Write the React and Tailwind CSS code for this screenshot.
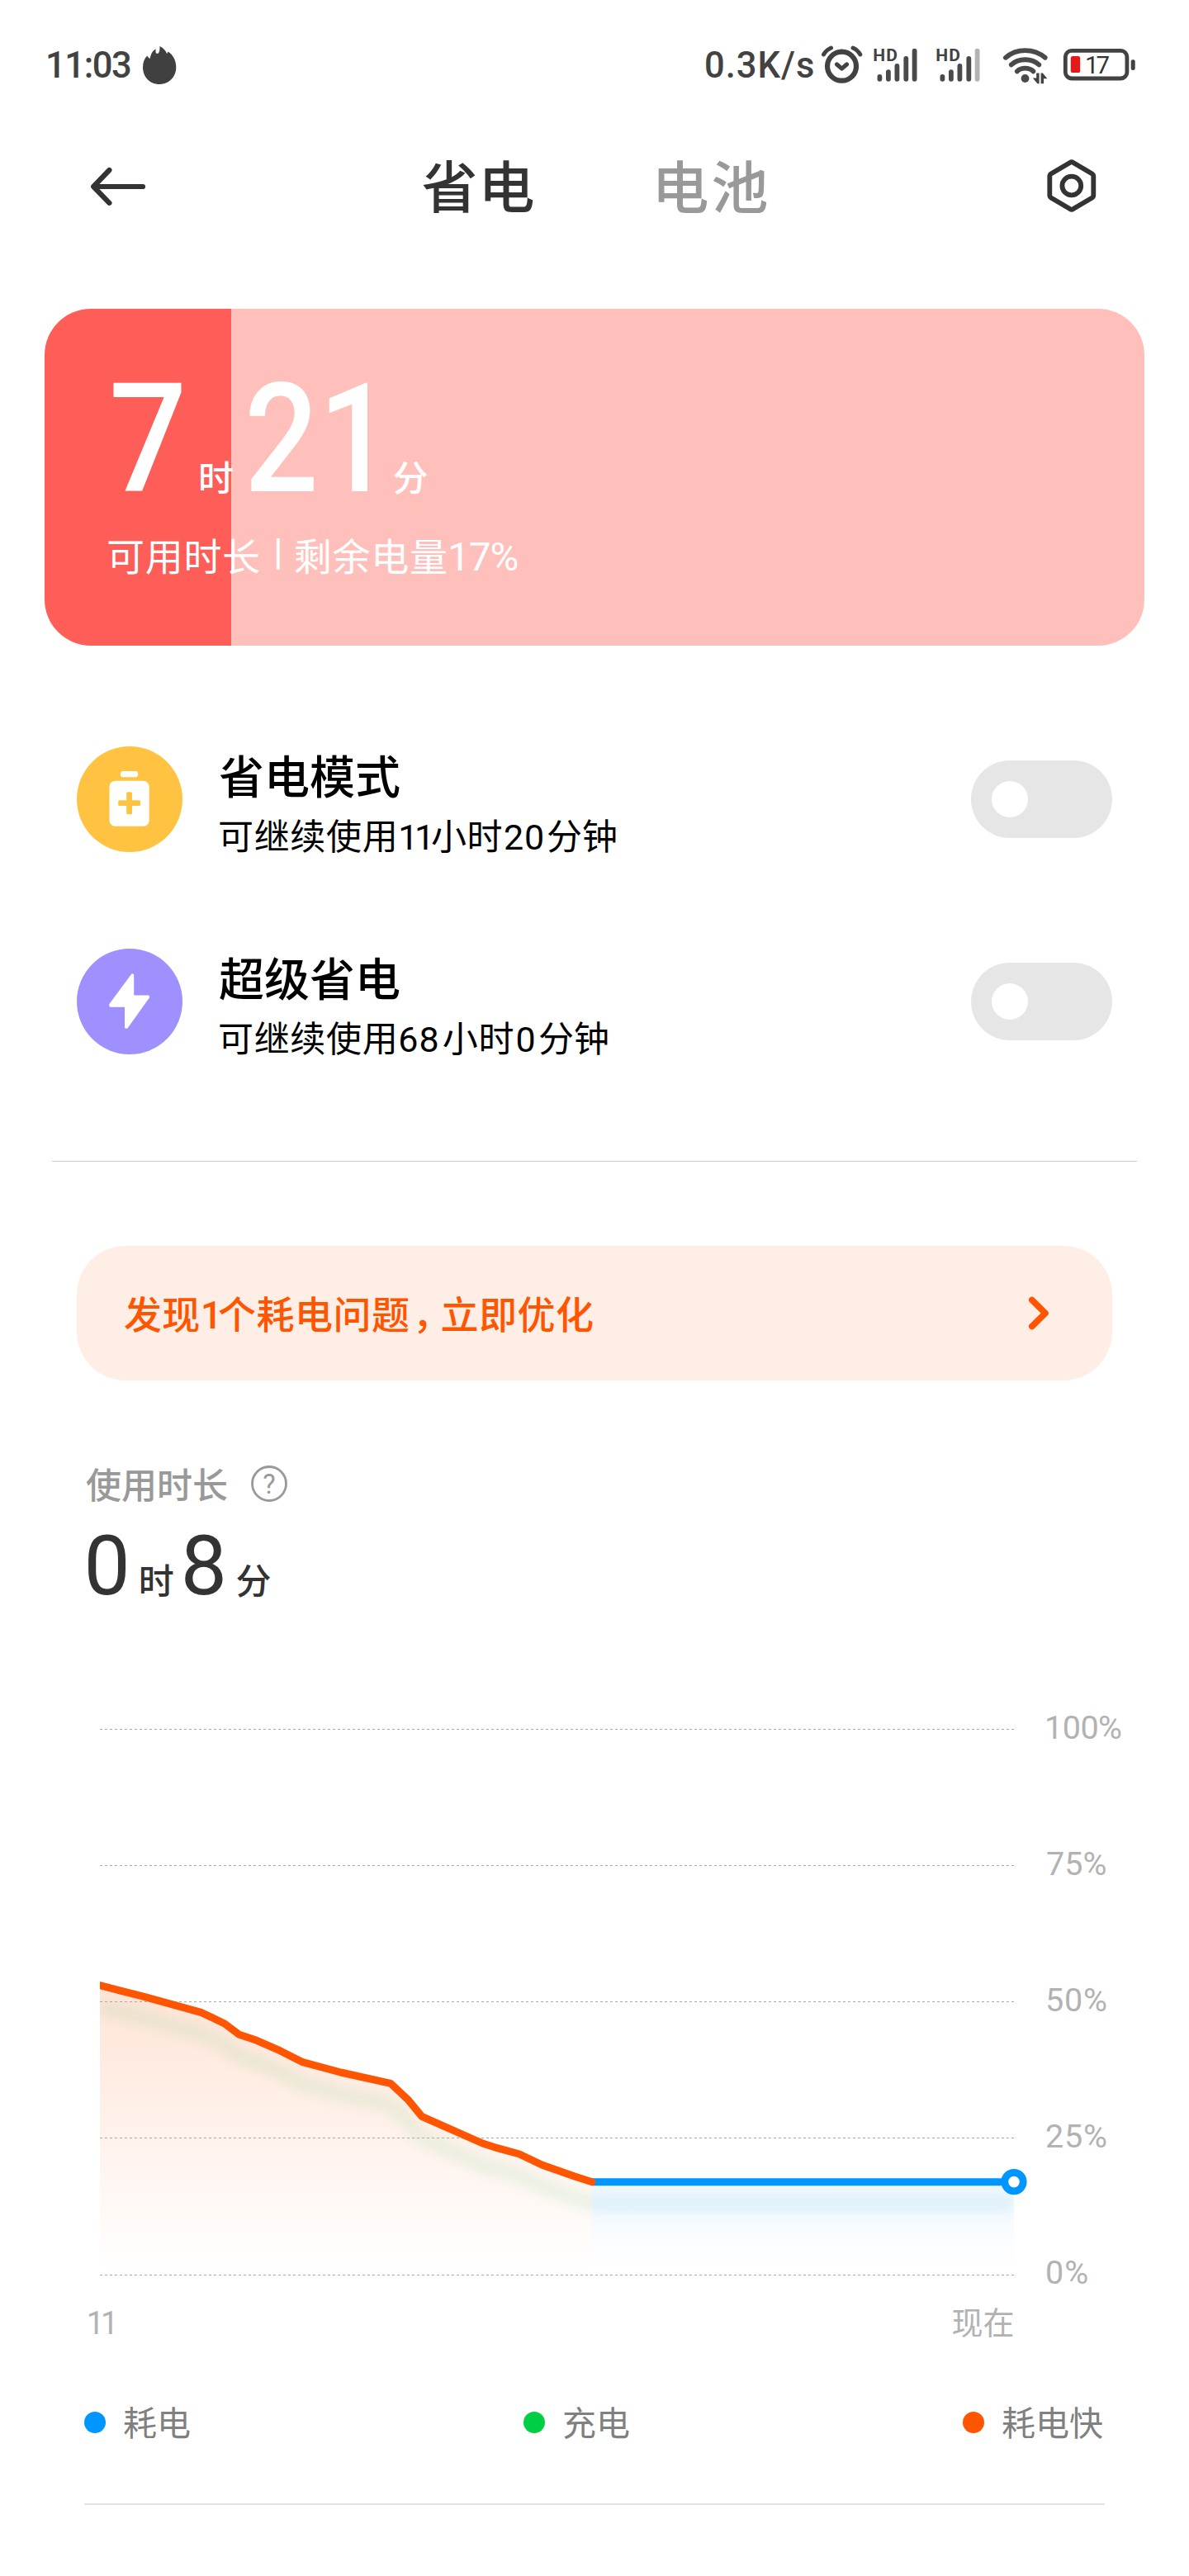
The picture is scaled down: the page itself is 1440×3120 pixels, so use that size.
import React from "react";

const FONT = 'Roboto, "Noto Sans CJK SC", sans-serif';

const SERIES = [
  [121, 2404.7], [147.9, 2411.7], [174.6, 2418.3], [244.3, 2437.7], [272, 2451],
  [289.8, 2464.3], [310.8, 2471.3], [339, 2483.7], [365.7, 2497.3], [412.6, 2510],
  [472.9, 2523.3], [493.8, 2542.7], [510.8, 2563.3], [584.5, 2596], [602.3, 2601.7],
  [629, 2609], [656.8, 2622.3], [696, 2636], [717, 2642.7],
];
const LINE = "M" + SERIES.map((p) => p.join(" ")).join("L");

function Alarm() {
  return (
    <svg className="h-[60px] w-[60px] shrink-0" viewBox="990 50 60 60" fill="none" stroke="#424242" strokeLinecap="round" strokeLinejoin="round">
      <circle cx="1019.5" cy="80.2" r="17.5" strokeWidth="6.2" />
      <path d="M997.5 66C999.5 62.5 1003 59.5 1006.5 58M1033 58C1036.5 59.5 1039.8 62.5 1041.8 66" strokeWidth="5" />
      <path d="M1013.5 78L1019.5 83.2L1025.5 78" strokeWidth="5" />
    </svg>
  );
}

function Signal({ weak }) {
  return (
    <svg className="h-[60px] w-[60px] shrink-0" viewBox="1055 50 60 60" fill="none" stroke="#4a4a4a" strokeLinecap="round" strokeWidth="5.8">
      <text x="1057.2" y="73.5" fontSize="21" fontWeight="700" letterSpacing="1.2" fill="#424242" stroke="none" fontFamily={FONT}>HD</text>
      <path d="M1065.4 93V95.8M1075.9 87.2V95.8M1086.4 80V95.8M1097.3 71V95.8" />
      <path d="M1107.6 61.6V95.8" stroke={weak ? "#b3b3b3" : "#4a4a4a"} />
    </svg>
  );
}

function Wifi() {
  return (
    <svg className="h-[60px] w-[65px] shrink-0" viewBox="1210 50 65 60" fill="none" stroke="#4a4a4a" strokeLinecap="round" strokeWidth="5.8">
      <path d="M1217.9 69.8C1231 58.2 1252 58.2 1265.7 69.8" />
      <path d="M1224.8 78.4C1233.5 70.2 1249.5 70.2 1258.3 78.4" />
      <path d="M1231.8 86.4C1236.5 81.4 1246.5 81.4 1251.4 86.4" />
      <circle cx="1241.5" cy="95" r="4.9" fill="#4a4a4a" stroke="none" />
      <path d="M1258.6 88.6V101.2H1256.4L1250.8 94.6H1255.2V88.6ZM1260.6 101.2V88.6H1262.8L1268.4 95.2H1264V101.2Z" fill="#424242" stroke="none" />
    </svg>
  );
}

function BatteryStatus() {
  return (
    <svg className="h-[60px] w-[98px] shrink-0" viewBox="1282 50 98 60">
      <rect x="1290.3" y="61.4" width="74.6" height="33.6" rx="7.5" fill="none" stroke="#424242" strokeWidth="4.8" />
      <rect x="1369.7" y="72.2" width="5" height="12.8" rx="2.2" fill="#424242" />
      <rect x="1296.8" y="68" width="11.4" height="20" rx="2.6" fill="#e61919" />
      <text x="1314" y="89.2" fontSize="29.4" fontWeight="400" letterSpacing="-3" fill="#333" fontFamily={FONT}>17</text>
    </svg>
  );
}

function StatusBar() {
  return (
    <div className="flex h-[160px] items-center pl-[55px] pr-[60px] text-[43.5px] font-medium leading-[160px] text-[#424242]">
      <span className="w-[113px] tracking-[-1.4px]">11:03</span>
      <svg className="h-[60px] w-[50px]" viewBox="168 50 50 60" fill="#404040">
        <path d="M193.3 56C197.5 57.8 200.6 61 202.3 65.3L203.4 62.4C209.5 66 213.3 73 213.3 81.5C213.3 93.5 204.3 102 193 102C181.7 102 173 93.5 173 81.5C173 75.8 175 70.8 178.2 67.5C179 69 180 70.2 181.9 71C182 66.5 184.5 61.5 188.7 59.2C188.3 61.5 188.5 63.5 189.3 64.8H191.6C193.3 62.6 193.8 59.5 193.3 56Z" />
      </svg>
      <div className="ml-auto flex items-center">
        <span className="w-[137px] tracking-[1px]">0.3K/s</span>
        <Alarm />
        <div className="ml-[5px] flex"><Signal /></div>
        <div className="ml-[15.7px] flex"><Signal weak /></div>
        <div className="ml-[19.3px] flex"><Wifi /></div>
        <div className="ml-[7px] flex"><BatteryStatus /></div>
      </div>
    </div>
  );
}

function Header() {
  return (
    <header className="flex h-[139px] items-center pl-[100px] pr-[103px] leading-[139px]">
      <svg className="h-[60px] w-[90px]" viewBox="100 199.5 90 60" fill="none" stroke="#333" strokeWidth="6.2" strokeLinecap="round" strokeLinejoin="round">
        <path d="M173 225.5H113.6M132.4 205.5L113.2 225.5L132.4 245.3" />
      </svg>
      <h1 className="ml-[320.5px] w-[279px] text-[68px] font-medium tracking-[1px] text-[#333]">省电</h1>
      <span className="text-[69px] font-medium tracking-[3px] text-[#999]">电池</span>
      <svg className="ml-auto h-[80px] w-[80px]" viewBox="1257 189.5 80 80" fill="none" stroke="#333" strokeWidth="5.8" strokeLinejoin="round">
        <path d="M1295.8 196.5Q1297.8 195 1299.8 196.5L1322.3 209.8Q1324.3 211 1324.3 213V236Q1324.3 238 1322.3 239.3L1299.8 252.6Q1297.8 254 1295.8 252.6L1273.3 239.3Q1271.3 238 1271.3 236V213Q1271.3 211 1273.3 209.8Z" />
        <circle cx="1297.8" cy="224.5" r="11.4" />
      </svg>
    </header>
  );
}

function RemainingCard() {
  return (
    <section className="mx-[54px] mt-[75px] h-[408px] overflow-hidden rounded-[56px] bg-[linear-gradient(to_right,#ff5d57_17%,#ffbfbb_17%)] pt-[66px] text-white">
      <div className="flex items-baseline pl-[78px] text-[43px] font-medium leading-none">
        <span className="w-[108px] origin-left scale-x-[0.9] text-[184.5px]">7</span>
        <span className="w-[56px]">时</span>
        <span className="w-[179.4px] origin-left scale-x-[0.855] whitespace-nowrap text-[184.5px]">21</span>
        <span>分</span>
      </div>
      <div className="mt-[20px] flex items-baseline whitespace-nowrap pl-[75px] text-[46px] leading-[60px]">
        <span className="w-[202.2px] tracking-[0.7px]">可用时长</span>
        <span className="relative bottom-[7px] w-[24.6px] text-[44px] font-bold leading-none">|</span>
        <span className="w-[186.4px] tracking-[0.7px]">剩余电量</span>
        <span className="text-[47.5px] tracking-[-1px]">17%</span>
      </div>
    </section>
  );
}

function Toggle() {
  return (
    <div className="ml-auto mt-[17px] flex h-[94px] w-[171px] items-center rounded-full bg-[#e6e6e6] pl-[25px]">
      <div className="h-[44px] w-[44px] rounded-full bg-white" />
    </div>
  );
}

function ModeRow({ icon, title, children, className }) {
  return (
    <div className={"flex h-[128px] items-start px-[93px] " + className}>
      {icon}
      <div className="ml-[44px] mt-[3px] whitespace-nowrap text-black">
        <div className="text-[55px] font-medium leading-[70px]">{title}</div>
        <div className="-ml-px mt-[11px] flex text-[43px] leading-[52px]">{children}</div>
      </div>
      <Toggle />
    </div>
  );
}

const SaverIcon = (
  <svg className="h-[128px] w-[128px] shrink-0" viewBox="93 904 128 128">
    <circle cx="157" cy="968" r="64" fill="#ffc341" />
    <rect x="145.9" y="934" width="21.2" height="7.2" rx="3" fill="#fff" />
    <rect x="132.5" y="945.7" width="48.2" height="55" rx="7" fill="#fff" />
    <rect x="143.2" y="969.3" width="26.8" height="6.8" rx="1.5" fill="#ffc341" />
    <rect x="153.2" y="959.2" width="6.8" height="27" rx="1.5" fill="#ffc341" />
  </svg>
);

const BoltIcon = (
  <svg className="h-[128px] w-[128px] shrink-0" viewBox="93 1149 128 128">
    <circle cx="157" cy="1213" r="64" fill="#9e91ff" />
    <path d="M160 1180.3L161.2 1180.6V1206.5H179.8L180.2 1207.6L153.6 1244.8L152 1244.5V1218.7H133.6L133.2 1216.6Z" fill="#fff" stroke="#fff" strokeWidth="2" strokeLinejoin="round" />
  </svg>
);

function Banner() {
  return (
    <section className="mx-[93px] mt-[102px] flex h-[163px] whitespace-nowrap rounded-[59px] bg-[#ffeee6] pl-[57px] pr-[67px] text-[46px] font-medium leading-[168px] text-[#ff5500]">
      <span className="w-[93px] tracking-[0.3px]">发现</span>
      <span className="w-[21px] tracking-[-6px]">1</span>
      <span className="w-[236px] tracking-[0.5px]">个耗电问题</span>
      <span className="w-[33.6px] tracking-[-13px]">，</span>
      <span className="tracking-[0.5px]">立即优化</span>
      <svg className="ml-auto h-[163px] w-[40px]" viewBox="1240 1509 40 163" fill="none" stroke="#ff5500" strokeWidth="7.6" strokeLinecap="round" strokeLinejoin="round">
        <path d="M1249.8 1574.5L1266 1590.5L1249.8 1606.5" />
      </svg>
    </section>
  );
}

function Usage() {
  return (
    <section className="mt-[98px]">
      <div className="flex h-[60px] pl-[104px] text-[43px] font-medium leading-[60px] text-[#999]">
        <span className="w-[196px]">使用时长</span>
        <svg className="h-[60px] w-[50px]" viewBox="300 1770 50 60">
          <circle cx="326" cy="1797" r="20.5" fill="none" stroke="#999" strokeWidth="2.8" />
          <text x="326" y="1809.3" textAnchor="middle" fontSize="32.5" fontWeight="400" fill="#999" fontFamily={FONT}>?</text>
        </svg>
      </div>
      <div className="mt-[17px] flex h-[100px] items-baseline pl-[101.4px] text-[43px] font-medium leading-none text-[#333]">
        <span className="w-[66.3px] text-[100px] font-normal">0</span>
        <span className="w-[51.1px]">时</span>
        <span className="w-[66.7px] text-[100px] font-normal">8</span>
        <span>分</span>
      </div>
    </section>
  );
}

function Chart() {
  return (
    <section className="mt-[113px]">
      <div className="flex h-[710px] pl-[100px]">
        <svg className="h-[710px] w-[1150px] shrink-0" viewBox="100 2060 1150 710" fill="none">
          <defs>
            <linearGradient id="fast" gradientUnits="userSpaceOnUse" x1="0" y1="2405" x2="0" y2="2750">
              <stop offset="0" stopColor="#ff5500" stopOpacity="0.16" />
              <stop offset="1" stopColor="#ff5500" stopOpacity="0" />
            </linearGradient>
            <linearGradient id="drain" gradientUnits="userSpaceOnUse" x1="0" y1="2643" x2="0" y2="2745">
              <stop offset="0" stopColor="#0090ff" stopOpacity="0.065" />
              <stop offset="1" stopColor="#0090ff" stopOpacity="0" />
            </linearGradient>
            <filter id="soft" filterUnits="userSpaceOnUse" x="80" y="2380" width="1200" height="340">
              <feGaussianBlur stdDeviation="7" />
            </filter>
            <clipPath id="plot"><rect x="121" y="2380" width="1107" height="376" /></clipPath>
            <clipPath id="start"><rect x="121" y="2380" width="620" height="376" /></clipPath>
          </defs>
          <path d={LINE + "V2755H121Z"} fill="url(#fast)" />
          <rect x="717" y="2643" width="511" height="112" fill="url(#drain)" />
          <g clipPath="url(#plot)">
            <path d={LINE} transform="translate(0 26)" stroke="#50c364" strokeWidth="19" opacity="0.11" filter="url(#soft)" />
            <path d="M717 2669.5H1226" stroke="#40a8d5" strokeWidth="19" opacity="0.12" filter="url(#soft)" />
          </g>
          {[2094.5, 2259.5, 2424.5, 2589.5, 2755.5].map((y) => (
            <path key={y} d={"M121 " + y + "H1228"} stroke="#a8a8a8" strokeWidth="1" strokeDasharray="3 3" />
          ))}
          <path d="M717 2642.7H1228" stroke="#0096ff" strokeWidth="9" />
          <path d={LINE} stroke="#ff5500" strokeWidth="9" strokeLinejoin="round" strokeLinecap="round" clipPath="url(#start)" />
          <circle cx="1228" cy="2642.6" r="11.2" fill="#fff" stroke="#0096ff" strokeWidth="8.8" />
        </svg>
        <div className="-mt-[50px] flex flex-col pl-[16px] text-[39.5px] leading-[165px] text-[#b2b2b2]">
          <span className="-ml-px tracking-[-0.5px]">100%</span>
          <span className="pl-px">75%</span>
          <span className="tracking-[0.8px]">50%</span>
          <span className="tracking-[0.8px]">25%</span>
          <span className="tracking-[1px]">0%</span>
        </div>
      </div>
      <div className="mt-[14px] flex h-[60px] pl-[104.7px] text-[38px] leading-[60px] text-[#b2b2b2]">
        <span className="w-[1047.8px] tracking-[-4px]">11</span>
        <span>现在</span>
      </div>
    </section>
  );
}

function Legend() {
  return (
    <div className="mt-[62px] flex h-[60px] whitespace-nowrap pl-[102px] text-[41px] leading-[60px] text-[#808080]">
      <div className="flex w-[532px]">
        <i className="mr-[21px] mt-[15px] h-[26px] w-[26px] rounded-full bg-[#0096ff]" />耗电
      </div>
      <div className="flex w-[532px]">
        <i className="mr-[21px] mt-[15px] h-[26px] w-[26px] rounded-full bg-[#00cf45]" />充电
      </div>
      <div className="flex">
        <i className="mr-[21px] mt-[15px] h-[26px] w-[26px] rounded-full bg-[#ff5500]" />耗电快
      </div>
    </div>
  );
}

export default function App() {
  return (
    <main className="h-[3120px] w-[1440px] overflow-hidden bg-white" style={{ fontFamily: FONT }}>
      <StatusBar />
      <Header />
      <RemainingCard />
      <ModeRow className="mt-[122px]" icon={SaverIcon} title="省电模式">
        <span className="w-[218.3px] tracking-[0.66px]">可继续使用</span>
        <span className="w-[39.6px] tracking-[-4.5px]">11</span>
        <span className="w-[88px] tracking-[0.6px]">小时</span>
        <span className="w-[52.2px] tracking-[1px]">20</span>
        <span>分钟</span>
      </ModeRow>
      <ModeRow className="mt-[117px]" icon={BoltIcon} title="超级省电">
        <span className="w-[218.3px] tracking-[0.66px]">可继续使用</span>
        <span className="w-[53.5px] tracking-[1px]">68</span>
        <span className="w-[87.6px] tracking-[0.6px]">小时</span>
        <span className="w-[28.5px] pl-px">0</span>
        <span>分钟</span>
      </ModeRow>
      <div className="mx-[63px] mt-[129px] h-px bg-[#cacaca]" />
      <Banner />
      <Usage />
      <Chart />
      <Legend />
      <div className="mx-[102px] mt-[66px] h-[2px] bg-[#e3e3e3]" />
    </main>
  );
}
